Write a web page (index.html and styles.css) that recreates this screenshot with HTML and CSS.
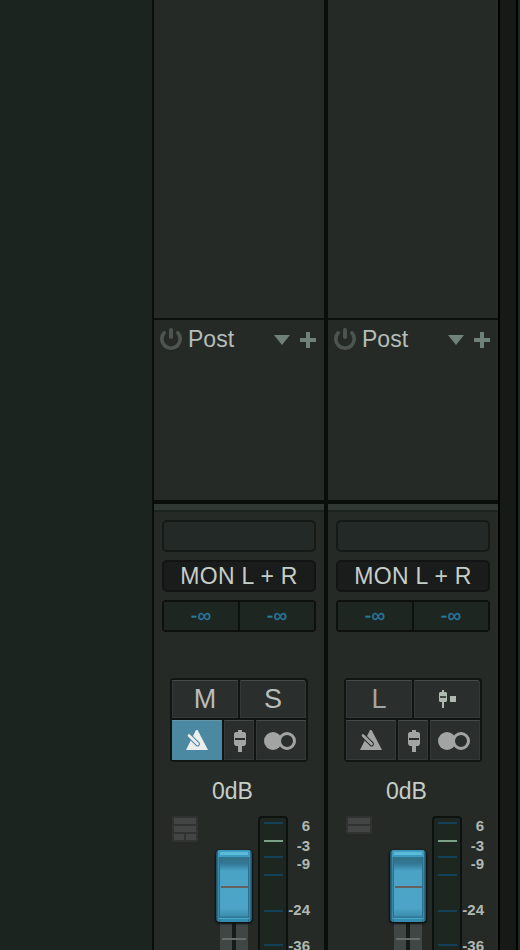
FILE: index.html
```html
<!DOCTYPE html>
<html lang="en">
<head>
  <meta charset="UTF-8">
  <meta name="viewport" content="width=device-width, initial-scale=1.0">
  <title>Mixer</title>
  <link rel="stylesheet" href="styles.css">
</head>
<body>

  <!-- Shared icons -->
  <svg class="icon-defs" width="0" height="0">
    <symbol id="power" viewBox="0 0 22 22">
      <path d="M4.2 4.8A9.2 9.2 0 1 0 17.8 4.8" fill="none" stroke="currentColor" stroke-width="3.6" stroke-linecap="round"/>
      <path d="M11 2V9" stroke="currentColor" stroke-width="4" stroke-linecap="round"/>
    </symbol>
    <symbol id="metronome" viewBox="0 0 24 22">
      <path d="M11 1H12.6L23 21H1Z" fill="currentColor"/>
      <path d="M4 6.5L12.6 15" stroke="var(--bg)" stroke-width="4.8" stroke-linecap="round"/>
      <path d="M4 6.5L12.6 15" stroke="currentColor" stroke-width="2.7" stroke-linecap="round"/>
    </symbol>
    <symbol id="fader" viewBox="0 0 12 22">
      <path d="M4 0H8V2H10.5L12 3.5V14L10.5 16H8V22H4V16H1.5L0 14V3.5L1.5 2H4Z" fill="currentColor"/>
      <path d="M1 9H11" stroke="var(--bg)" stroke-width="2"/>
    </symbol>
    <symbol id="circles" viewBox="0 0 32 18">
      <circle cx="9" cy="9" r="9" fill="currentColor"/>
      <circle cx="23" cy="9" r="7.5" fill="var(--bg)" stroke="currentColor" stroke-width="3"/>
    </symbol>
    <symbol id="faderSquare" viewBox="0 0 18 18">
      <path d="M4 0H6V2H8L9 3V11L8 12H6V18H4V12H2L1 11V3L2 2H4Z" fill="currentColor"/>
      <path d="M2 7H8" stroke="var(--bg)" stroke-width="1.6"/>
      <path d="M12 6H18V12H12Z" fill="currentColor"/>
    </symbol>
  </svg>

  <div class="mixer">
    <div class="side-panel"></div>

    <div class="strip">
      <div class="inserts"></div>
      <div class="sends">
        <div class="sends-header">
          <svg class="power"><use href="#power"/></svg>
          <span class="sends-title">Post</span>
          <svg class="arrow" viewBox="0 0 16 10"><path d="M0 0H16L8 10Z" fill="currentColor"/></svg>
          <svg class="plus" viewBox="0 0 16 16"><path d="M6 0H10V6H16V10H10V16H6V10H0V6H6Z" fill="currentColor"/></svg>
        </div>
      </div>
      <div class="divider"></div>
      <div class="channel">
        <div class="slot"></div>
        <div class="slot output">MON L + R</div>
        <div class="peaks"><span>-∞</span><span>-∞</span></div>
        <div class="buttons">
          <div class="button-row">
            <div class="button">M</div>
            <div class="button">S</div>
          </div>
          <div class="button-row small">
            <div class="button active"><svg class="metronome"><use href="#metronome"/></svg></div>
            <div class="button"><svg class="fader-icon"><use href="#fader"/></svg></div>
            <div class="button"><svg class="circles"><use href="#circles"/></svg></div>
          </div>
        </div>
        <div class="volume">0dB</div>
        <div class="fader-area">
          <div class="layout-icon"><i></i><i></i><i class="half"></i><i class="half"></i></div>
          <div class="track"><div class="cap"></div><div class="tick"></div></div>
          <div class="meter"><i></i><i class="zero"></i><i></i><i></i><i></i><i></i></div>
          <div class="scale"><span>6</span><span>-3</span><span>-9</span><span>-24</span><span>-36</span></div>
        </div>
      </div>
    </div>

    <div class="strip">
      <div class="inserts"></div>
      <div class="sends">
        <div class="sends-header">
          <svg class="power"><use href="#power"/></svg>
          <span class="sends-title">Post</span>
          <svg class="arrow" viewBox="0 0 16 10"><path d="M0 0H16L8 10Z" fill="currentColor"/></svg>
          <svg class="plus" viewBox="0 0 16 16"><path d="M6 0H10V6H16V10H10V16H6V10H0V6H6Z" fill="currentColor"/></svg>
        </div>
      </div>
      <div class="divider"></div>
      <div class="channel">
        <div class="slot"></div>
        <div class="slot output">MON L + R</div>
        <div class="peaks"><span>-∞</span><span>-∞</span></div>
        <div class="buttons">
          <div class="button-row">
            <div class="button listen">L</div>
            <div class="button"><svg class="fader-square"><use href="#faderSquare"/></svg></div>
          </div>
          <div class="button-row small">
            <div class="button"><svg class="metronome"><use href="#metronome"/></svg></div>
            <div class="button"><svg class="fader-icon"><use href="#fader"/></svg></div>
            <div class="button"><svg class="circles"><use href="#circles"/></svg></div>
          </div>
        </div>
        <div class="volume">0dB</div>
        <div class="fader-area">
          <div class="layout-icon"><i></i><i></i></div>
          <div class="track"><div class="cap"></div><div class="tick"></div></div>
          <div class="meter"><i></i><i class="zero"></i><i></i><i></i><i></i><i></i></div>
          <div class="scale"><span>6</span><span>-3</span><span>-9</span><span>-24</span><span>-36</span></div>
        </div>
      </div>
    </div>

    <div class="edge"></div>
  </div>

</body>
</html>
```
FILE: styles.css
```css
* {
  box-sizing: border-box;
}

body {
  margin: 0;
  background: #0a0e0b;
  font-family: "Liberation Sans", Arial, sans-serif;
  color: #c6cec8;
  overflow: hidden;
}

svg {
  display: block;
}

.icon-defs {
  position: absolute;
}

.mixer {
  display: flex;
  width: 520px;
  height: 950px;
  overflow: hidden;
}

.side-panel {
  width: 154px;
  background: #1c241f;
  border-right: 2px solid #0a0e0b;
}

.strip {
  width: 170px;
  display: flex;
  flex-direction: column;
  background: #252a27;
}

.strip + .strip {
  margin-left: 4px;
}

.edge {
  width: 20px;
  margin-right: 2px;
  background: #151a17;
  border-left: 2px solid #000;
  border-right: 2px solid #000;
  box-shadow: 2px 0 #1c2722;
}

/* Inserts and sends */
.inserts {
  height: 320px;
  flex-shrink: 0;
  border-bottom: 2px solid #0c100e;
}

.sends {
  height: 180px;
  flex-shrink: 0;
}

.sends-header {
  display: flex;
  align-items: center;
  height: 38px;
  padding: 0 8px 0 6px;
  color: #6f8278;
}

.power {
  width: 22px;
  height: 22px;
  color: #4d5551;
}

.sends-title {
  flex: 1;
  padding-left: 6px;
  font-size: 23px;
  line-height: 26px;
  margin-bottom: 1px;
  color: #b5beb8;
}

.arrow {
  width: 16px;
  height: 10px;
  margin: 2px 10px 0 0;
}

.plus {
  width: 16px;
  height: 16px;
  margin-top: 2px;
}

.divider {
  height: 12px;
  flex-shrink: 0;
  background: #2f3832;
  border-top: 4px solid #0a0e0b;
  border-bottom: 2px solid #1c221e;
}

/* Channel */
.channel {
  padding: 8px 8px 0;
}

.slot {
  height: 32px;
  margin-bottom: 8px;
  border: 2px solid #151a17;
  border-radius: 5px;
  background: #232926;
}

.output {
  border-color: #111413;
  background: #1a1b1b;
  font-size: 23px;
  line-height: 29px;
  letter-spacing: 0.3px;
  text-align: center;
  white-space: nowrap;
}

.peaks {
  display: grid;
  grid-template-columns: 1fr 1fr;
  gap: 2px;
  height: 32px;
  border: 2px solid #0c100e;
  border-radius: 4px;
  background: #0c100e;
}

.peaks span {
  background: #1e2621;
  color: #287a9e;
  font-size: 19px;
  line-height: 28px;
  letter-spacing: 0.4px;
  text-align: center;
  -webkit-text-stroke: 0.4px #287a9e;
}

.buttons {
  display: flex;
  flex-direction: column;
  gap: 2px;
  width: 138px;
  height: 84px;
  margin: 46px auto 0 8px;
  padding: 2px;
  border-radius: 4px;
  background: #101412;
}

.button-row {
  display: grid;
  grid-template-columns: 66px 66px;
  gap: 2px;
  height: 38px;
}

.button-row.small {
  grid-template-columns: 50px 30px 50px;
  height: 40px;
}

.button {
  --bg: #2a2e2d;
  display: flex;
  align-items: center;
  justify-content: center;
  min-height: 0;
  background: var(--bg);
  border: 1px solid #343938;
  border-top-color: #464b49;
  color: #a1a4a3;
  font-size: 27px;
  line-height: 36px;
}

.button.active {
  --bg: #4b88a2;
  border-color: #4b88a2;
  border-top-color: #6296ab;
  color: #eceeee;
}

.button-row:first-child .button {
  color: #b9bdbb;
}

.button-row .button.listen {
  color: #a2a5a4;
}

.button-row:first-child .button:last-child {
  border-top-right-radius: 3px;
}

.metronome {
  width: 24px;
  height: 22px;
}

.fader-icon {
  width: 12px;
  height: 22px;
  margin: 1px 0 0 2px;
}

.circles {
  width: 32px;
  height: 18px;
  margin: 2px 2px 0 0;
}

.fader-square {
  width: 18px;
  height: 18px;
  color: #adb9b1;
}

.volume {
  margin-top: 14px;
  padding-right: 13px;
  height: 30px;
  font-size: 23px;
  line-height: 30px;
  text-align: center;
}

/* Fader */
.fader-area {
  display: flex;
  height: 160px;
  margin-top: 10px;
  padding-left: 10px;
}

.layout-icon {
  display: flex;
  flex-wrap: wrap;
  align-self: flex-start;
  gap: 2px;
  width: 26px;
  padding: 2px;
  border-radius: 2px;
  background: #303332;
}

.layout-icon i {
  width: 22px;
  height: 6px;
  background: #424544;
}

.layout-icon .half {
  width: 10px;
}

.track {
  width: 36px;
  margin-left: 18px;
  padding-top: 34px;
  background: linear-gradient(90deg, transparent 4px, #404643 4px 16px, #161a18 16px 20px, #404643 20px 32px, transparent 32px) 0 50px no-repeat;
}

.cap {
  height: 72px;
  border-radius: 4px;
  background:
    linear-gradient(#67605f, #67605f) 5px 36px / 27px 2px no-repeat,
    linear-gradient(#5bb9da, #5bb9da) 4px 2px / 28px 3px no-repeat,
    linear-gradient(#4aa8cc, #4aa8cc) 3px 68px / 30px 1px no-repeat,
    linear-gradient(#3d9cc0, #3d9cc0) 2px 0 / 32px 7px no-repeat,
    linear-gradient(90deg, #225366 1px, #2d6c86 1px 2px, #3988a8 2px 3px, #2e708b 3px 4px, transparent 4px 32px, #2e708b 32px 33px, #3988a8 33px 34px, #2d6c86 34px 35px, #225366 35px),
    linear-gradient(#32738c 7px, #32738c 10px, #34799a 14px, #4aa2c5 21px, #4ca5c8 58px, #3c8daf 66px, #2e7492 67px, #358bad 69px 72px);
  box-shadow: 0 1px 2px 1px #0d1211;
}

.tick {
  width: 24px;
  height: 2px;
  margin: 16px auto 0;
  background: #666c69;
}

.meter {
  width: 30px;
  margin-left: 6px;
  padding: 4px 4px 0;
  border: 2px solid #0d110f;
  border-radius: 4px;
  background: #1e2620;
}

.meter i {
  display: block;
  height: 2px;
  width: 19px;
  background: #153f55;
}

.meter .zero {
  background: #7da188;
}

.meter i:nth-child(2) { margin-top: 16px; }
.meter i:nth-child(3) { margin-top: 14px; }
.meter i:nth-child(4) { margin-top: 16px; }
.meter i:nth-child(5) { margin-top: 34px; }
.meter i:nth-child(6) { margin-top: 32px; }

.scale {
  width: 22px;
  padding-top: 2px;
  font-size: 15px;
  font-weight: bold;
  line-height: 16px;
  color: #b1b8b3;
}

.scale span {
  display: flex;
  justify-content: flex-end;
}

.scale span:nth-child(2) { margin-top: 4px; }
.scale span:nth-child(3) { margin-top: 2px; }
.scale span:nth-child(4) { margin-top: 30px; }
.scale span:nth-child(5) { margin-top: 20px; }
```
